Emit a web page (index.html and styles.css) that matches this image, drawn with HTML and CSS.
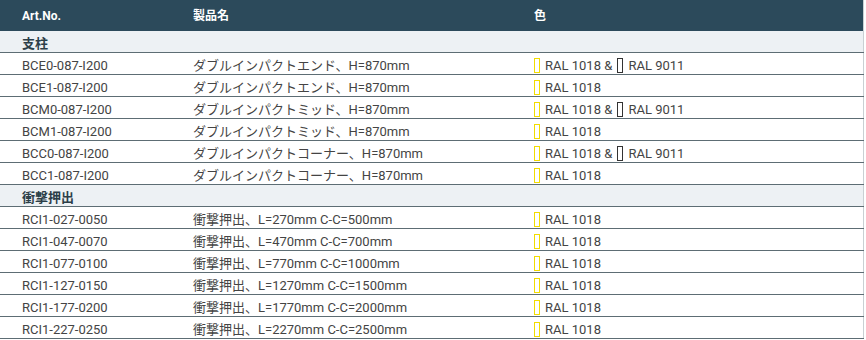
FILE: index.html
```html
<!DOCTYPE html>
<html lang="ja">
<head>
<meta charset="utf-8">
<link rel="stylesheet" href="styles.css">
</head>
<body>
<table class="spec">
  <thead>
    <tr><th class="c1">Art.No.</th><th class="c2">製品名</th><th class="c3">色</th></tr>
  </thead>
  <tbody>
    <tr class="group"><td colspan="3">支柱</td></tr>
    <tr><td>BCE0-087-I200</td><td>ダブルインパクトエンド、H=870mm</td><td><span class="sw y"></span>RAL 1018 &amp; <span class="sw d"></span>RAL 9011</td></tr>
    <tr><td>BCE1-087-I200</td><td>ダブルインパクトエンド、H=870mm</td><td><span class="sw y"></span>RAL 1018</td></tr>
    <tr><td>BCM0-087-I200</td><td>ダブルインパクトミッド、H=870mm</td><td><span class="sw y"></span>RAL 1018 &amp; <span class="sw d"></span>RAL 9011</td></tr>
    <tr><td>BCM1-087-I200</td><td>ダブルインパクトミッド、H=870mm</td><td><span class="sw y"></span>RAL 1018</td></tr>
    <tr><td>BCC0-087-I200</td><td>ダブルインパクトコーナー、H=870mm</td><td><span class="sw y"></span>RAL 1018 &amp; <span class="sw d"></span>RAL 9011</td></tr>
    <tr><td>BCC1-087-I200</td><td>ダブルインパクトコーナー、H=870mm</td><td><span class="sw y"></span>RAL 1018</td></tr>
    <tr class="group"><td colspan="3">衝撃押出</td></tr>
    <tr><td>RCI1-027-0050</td><td>衝撃押出、L=270mm C-C=500mm</td><td><span class="sw y"></span>RAL 1018</td></tr>
    <tr><td>RCI1-047-0070</td><td>衝撃押出、L=470mm C-C=700mm</td><td><span class="sw y"></span>RAL 1018</td></tr>
    <tr><td>RCI1-077-0100</td><td>衝撃押出、L=770mm C-C=1000mm</td><td><span class="sw y"></span>RAL 1018</td></tr>
    <tr><td>RCI1-127-0150</td><td>衝撃押出、L=1270mm C-C=1500mm</td><td><span class="sw y"></span>RAL 1018</td></tr>
    <tr><td>RCI1-177-0200</td><td>衝撃押出、L=1770mm C-C=2000mm</td><td><span class="sw y"></span>RAL 1018</td></tr>
    <tr><td>RCI1-227-0250</td><td>衝撃押出、L=2270mm C-C=2500mm</td><td><span class="sw y"></span>RAL 1018</td></tr>
  </tbody>
</table>
</body>
</html>
```
FILE: styles.css
```css
html, body {
  margin: 0;
  padding: 0;
  background: #fff;
}
body {
  font-family: Roboto, "Noto Sans CJK JP", sans-serif;
  color: #444;
  font-size: 13px;
}
.spec {
  width: 864px;
  border-collapse: collapse;
  border-right: 1px solid #c9d0d3;
}
.spec th {
  background: #2c4a5b;
  color: #fff;
  font-weight: 700;
  font-size: 12px;
  text-align: left;
  height: 31px;
  padding: 0;
  line-height: 16px;
  vertical-align: middle;
}
.spec th.c1 { width: 171px; padding-left: 22px; }
.spec th.c2 { width: 341px; }
.spec td {
  height: 18px;
  padding: 3px 0 0;
  line-height: 17px;
  vertical-align: middle;
  border-bottom: 1px solid #5d6d74;
  white-space: nowrap;
}
.spec td:first-child { padding-left: 22px; }
.spec tr.group td {
  background: #edf1f4;
  color: #2c3e48;
  font-weight: 700;
  font-size: 13px;
}
.sw {
  display: inline-block;
  width: 4px;
  height: 13px;
  border: 1px solid #f2dc00;
  vertical-align: -3px;
  margin-right: 5px;
}
.sw.d {
  border-color: #333;
  margin-left: 2px;
}
```
